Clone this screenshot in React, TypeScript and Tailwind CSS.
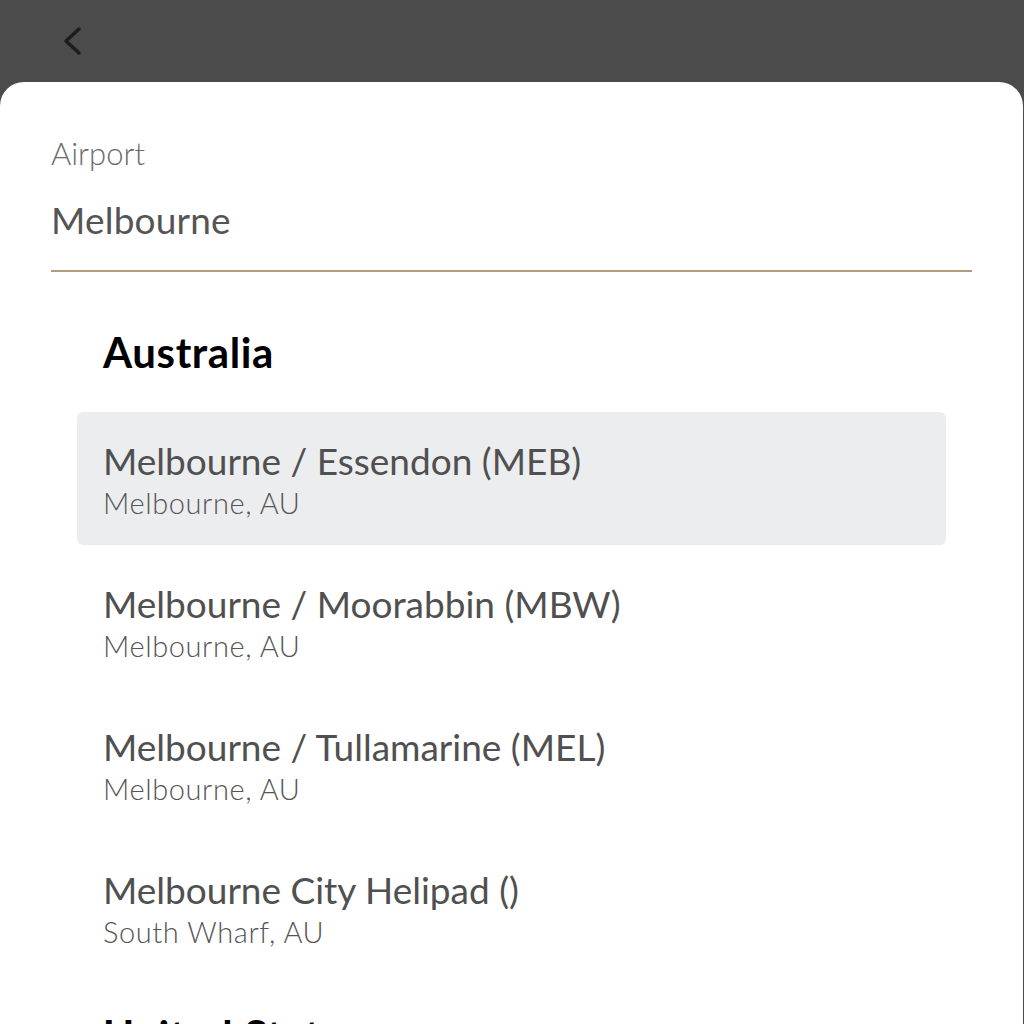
const groups = [
  {
    country: 'Australia',
    airports: [
      { name: 'Melbourne / Essendon (MEB)', place: 'Melbourne, AU', active: true },
      { name: 'Melbourne / Moorabbin (MBW)', place: 'Melbourne, AU' },
      { name: 'Melbourne / Tullamarine (MEL)', place: 'Melbourne, AU' },
      { name: 'Melbourne City Helipad ()', place: 'South Wharf, AU' },
    ],
  },
  {
    country: 'United States',
    airports: [{ name: 'Melbourne International (MLB)', place: 'Melbourne, US' }],
  },
]

const App = () => {
  return (
    <div className="h-[1024px] overflow-hidden flex flex-col bg-[#4b4b4b] font-['Lato','Noto_Sans',sans-serif]">
      <div className="h-[82px] shrink-0 flex items-center pl-[60px]">
        <svg width="24" height="32" viewBox="0 0 24 32" fill="none">
          <path
            d="M19 4 L6 16 L19 28"
            stroke="#1c1c1c"
            strokeWidth="3.5"
            strokeLinecap="round"
            strokeLinejoin="round"
          />
        </svg>
      </div>

      <div className="flex-1 mr-px bg-white rounded-t-[24px] px-[51px] pt-[53px]">
        <label className="block text-[31px] leading-[36px] font-light text-[#6b6b6b]">
          Airport
        </label>
        <div className="mt-[27px] pb-[28px] border-b-2 border-[#b39b7d] text-[37px] leading-[44px] text-[#555555] tracking-[0.2px]">
          Melbourne
        </div>

        <div className="px-[26px] pt-[56px]">
          {groups.map((group, gi) => (
            <div key={group.country} className={gi > 0 ? 'mt-[37px]' : ''}>
              <h2 className="px-[26px] text-[42px] leading-[48px] font-bold text-black tracking-[0.6px]">
                {group.country}
              </h2>
              <ul className="mt-[36px] flex flex-col gap-[10px]">
                {group.airports.map((a) => (
                  <li
                    key={a.name}
                    className={`px-[26px] pt-[27px] pb-[26px] rounded-[6px] ${
                      a.active ? 'bg-[#ecedef]' : ''
                    }`}
                  >
                    <div className="text-[37px] leading-[44px] text-[#505050]">{a.name}</div>
                    <div className="mt-[4px] text-[29px] leading-[32px] font-light text-[#555555] tracking-[0.6px]">
                      {a.place}
                    </div>
                  </li>
                ))}
              </ul>
            </div>
          ))}
        </div>
      </div>
    </div>
  )
}

export default App
